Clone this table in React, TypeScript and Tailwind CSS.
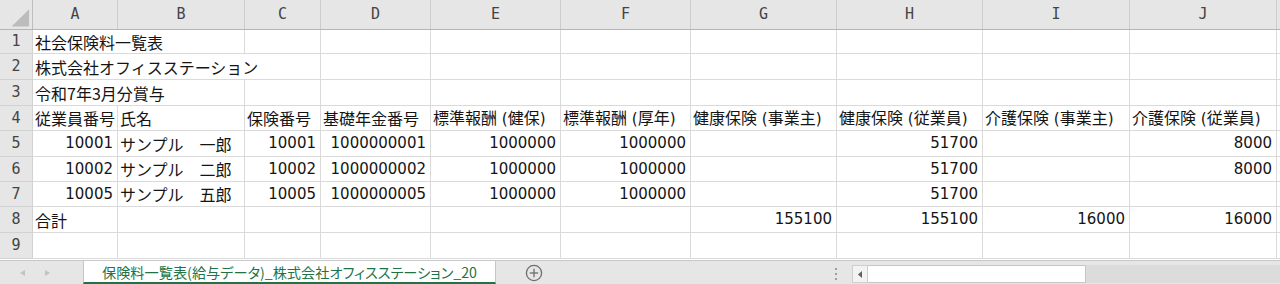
import React from "react";

type Cell = { v?: string | number; span?: 2 | 3 };

const GRID =
  "grid grid-cols-[33px_85px_127px_76px_110px_130px_130px_146px_146px_147px_147px_1fr]";

const COLS = ["A", "B", "C", "D", "E", "F", "G", "H", "I", "J"];

const ROW_H = [
  "h-[24px]",
  "h-[26px]",
  "h-[26px]",
  "h-[25px]",
  "h-[26px]",
  "h-[25px]",
  "h-[25px]",
  "h-[26px]",
  "h-[26px]",
];

const SPAN: Record<number, string> = { 1: "", 2: "col-span-2", 3: "col-span-3" };

const e = (n: number): Cell[] => Array.from({ length: n }, () => ({}));
const r = (...vals: (string | number)[]): Cell[] => vals.map((v) => ({ v }));

const ROWS: Cell[][] = [
  [{ v: "社会保険料一覧表", span: 2 }, ...e(8)],
  [{ v: "株式会社オフィスステーション", span: 3 }, ...e(7)],
  [{ v: "令和7年3月分賞与", span: 2 }, ...e(8)],
  r(
    "従業員番号",
    "氏名",
    "保険番号",
    "基礎年金番号",
    "標準報酬 (健保)",
    "標準報酬 (厚年)",
    "健康保険 (事業主)",
    "健康保険 (従業員)",
    "介護保険 (事業主)",
    "介護保険 (従業員)"
  ),
  r(10001, "サンプル　一郎", 10001, 1000000001, 1000000, 1000000, "", 51700, "", 8000),
  r(10002, "サンプル　二郎", 10002, 1000000002, 1000000, 1000000, "", 51700, "", 8000),
  r(10005, "サンプル　五郎", 10005, 1000000005, 1000000, 1000000, "", 51700, "", ""),
  r("合計", "", "", "", "", "", 155100, 155100, 16000, 16000),
  e(10),
];

function TextValue({ s }: { s: string }) {
  const m = s.match(/^(.*) \((.*)\)$/);
  if (!m) return <span>{s}</span>;
  return (
    <span>
      {m[1]}
      <span className="font-['DejaVu_Sans',sans-serif] text-[15px]">{"\u00a0("}</span>
      {m[2]}
      <span className="font-['DejaVu_Sans',sans-serif] text-[15px]">{")"}</span>
    </span>
  );
}

function HeaderRow() {
  return (
    <div className={`${GRID} h-[30px] bg-[#e6e6e6] border-b border-[#b5b5b5]`}>
      <div className="border-r border-[#bdbdbd] flex items-end justify-end">
        <svg width="33" height="29" viewBox="0 0 33 29" className="block">
          <polygon points="30,9 30,27 12,27" fill="#bcbcbc" />
        </svg>
      </div>
      {COLS.map((c) => (
        <div
          key={c}
          className="border-r border-[#cdcdcd] flex items-center justify-center text-[15px] text-[#444] font-['DejaVu_Sans_Mono',monospace]"
        >
          {c}
        </div>
      ))}
      <div />
    </div>
  );
}

function DataRow({ idx, cells }: { idx: number; cells: Cell[] }) {
  return (
    <div className={`${GRID} ${ROW_H[idx]}`}>
      <div className="bg-[#e6e6e6] border-r border-[#bdbdbd] border-b border-[#d2d2d2] flex items-center justify-center text-[15px] text-[#444] font-['DejaVu_Sans_Mono',monospace]">
        {idx + 1}
      </div>
      {cells.map((c, i) => {
        const isNum = typeof c.v === "number";
        return (
          <div
            key={i}
            className={`${SPAN[c.span ?? 1]} border-r border-b border-[#dadada] flex items-center whitespace-nowrap overflow-hidden text-[#141414] ${
              isNum
                ? "justify-end pr-[4px] text-[15px] font-['DejaVu_Sans',sans-serif]"
                : "justify-start pl-[2px] text-[16px] font-['Noto_Sans_CJK_JP',sans-serif]"
            }`}
          >
            {isNum ? c.v : <TextValue s={(c.v as string) ?? ""} />}
          </div>
        );
      })}
      <div className="border-b border-[#dadada]" />
    </div>
  );
}

function TabBar() {
  return (
    <div className="h-[24px] mt-[1px] flex bg-[#e6e6e6] border-t border-[#c8c8c8]">
      <div className="w-[83px] flex items-center">
        <svg width="83" height="23" viewBox="0 0 83 23" className="block">
          <polygon points="25,9 25,15 20,12" fill="#c3c3c3" />
          <polygon points="45,9 45,15 50,12" fill="#c3c3c3" />
        </svg>
      </div>
      <div className="w-[413px] bg-white border-l border-r border-[#c6c6c6] border-b-2 border-b-[#217346] flex items-center justify-center text-[14.2px] text-[#217346] font-['Noto_Sans_CJK_JP',sans-serif] [font-feature-settings:'palt'] whitespace-nowrap leading-none pt-[1px]">
        保険料一覧表(給与データ)_株式会社オフィスステーション_20
      </div>
      <div className="w-[75px] flex items-center justify-center">
        <svg width="18" height="18" viewBox="0 0 18 18" className="block">
          <circle cx="9" cy="9" r="7.6" fill="none" stroke="#6e6e6e" strokeWidth="1.3" />
          <line x1="9" y1="4.8" x2="9" y2="13.2" stroke="#6e6e6e" strokeWidth="1.3" />
          <line x1="4.8" y1="9" x2="13.2" y2="9" stroke="#6e6e6e" strokeWidth="1.3" />
        </svg>
      </div>
      <div className="w-[259px]" />
      <div className="w-[12px] flex items-center justify-center">
        <svg width="4" height="16" viewBox="0 0 4 16" className="block">
          <rect x="1" y="3" width="2" height="2" fill="#9e9e9e" />
          <rect x="1" y="8" width="2" height="2" fill="#9e9e9e" />
          <rect x="1" y="13" width="2" height="2" fill="#9e9e9e" />
        </svg>
      </div>
      <div className="w-[10px]" />
      <div className="flex-1 flex items-start pt-[4px]">
        <div className="w-[16px] h-[18px] bg-[#f3f3f3] border border-[#cfcfcf] flex items-center justify-center">
          <svg width="5" height="7" viewBox="0 0 5 7" className="block">
            <polygon points="4,0 4,7 0,3.5" fill="#5f5f5f" />
          </svg>
        </div>
        <div className="w-[218px] h-[18px] bg-white border border-[#c6c6c6] border-l-0" />
        <div className="flex-1 h-[18px] bg-[#dcdcdc]" />
      </div>
    </div>
  );
}

export default function App() {
  return (
    <div className="w-[1280px] h-[284px] bg-white overflow-hidden flex flex-col">
      <HeaderRow />
      {ROWS.map((cells, i) => (
        <DataRow key={i} idx={i} cells={cells} />
      ))}
      <TabBar />
    </div>
  );
}
